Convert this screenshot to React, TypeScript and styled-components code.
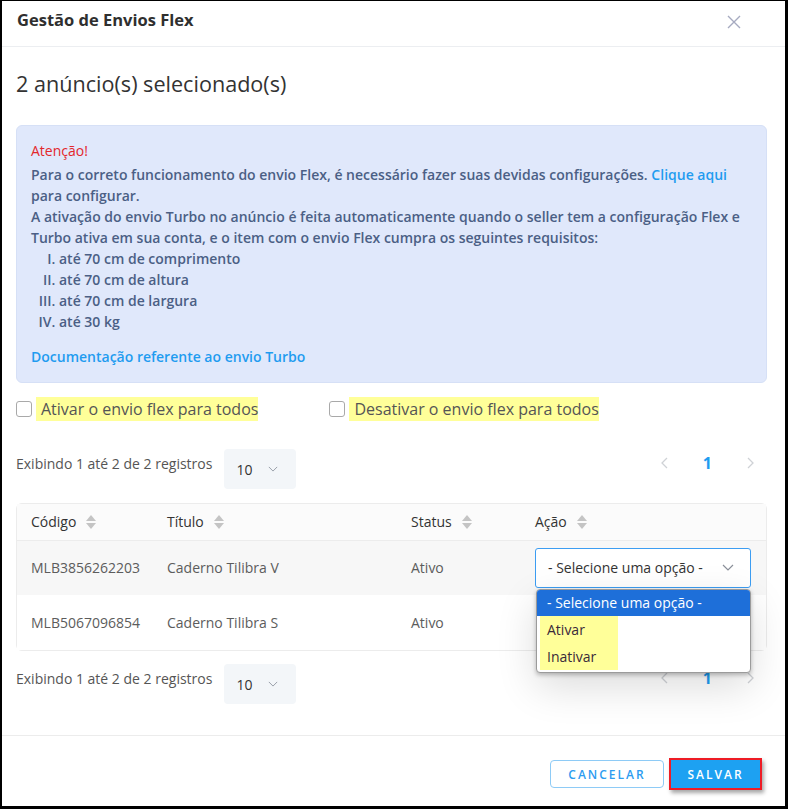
import React from "react";
import styled, { createGlobalStyle } from "styled-components";

const Global = createGlobalStyle`
  html, body { margin: 0; padding: 0; background: #fff; }
  body { font-family: "Open Sans", "Noto Sans", sans-serif; }
  * { box-sizing: border-box; }
`;

const Frame = styled.div`
  width: 788px;
  height: 809px;
  border-style: solid;
  border-color: #000;
  border-width: 1px 3px 3px 2px;
  background: #fff;
  display: flex;
  flex-direction: column;
`;

const Header = styled.header`
  height: 46px;
  border-bottom: 1px solid #eceef1;
  display: flex;
  justify-content: space-between;
  align-items: flex-start;
  padding: 8px 44px 0 15px;
`;

const Title = styled.h1`
  margin: 0;
  font-size: 16.5px;
  line-height: 22px;
  font-weight: 700;
  color: #2f2f2f;
`;

const CloseBtn = styled.button`
  border: 0;
  background: none;
  padding: 0;
  margin-top: 6px;
  width: 14px;
  height: 14px;
  display: flex;
  cursor: pointer;
`;

const Body = styled.main`
  flex: 1;
  padding: 0 18px 0 14px;
  display: flex;
  flex-direction: column;
`;

const Heading = styled.h2`
  margin: 23px 0 0;
  font-size: 21.6px;
  line-height: 28px;
  font-weight: 400;
  color: #333;
`;

const Alert = styled.div`
  margin-top: 27px;
  background: #e0e8fb;
  border: 1px solid #d6e0f6;
  border-radius: 6px;
  padding: 14px 15px 15px 14px;
  font-size: 14px;
  line-height: 21px;
  font-weight: 600;
  color: #4b5f85;
`;

const AlertTitle = styled.div`
  color: #e3262b;
  font-weight: 400;
  margin-bottom: 3px;
`;

const Link = styled.a`
  color: #1f9cf0;
  text-decoration: none;
`;

const RomanList = styled.ol`
  list-style: upper-roman;
  margin: 0;
  padding-left: 28px;
`;

const DocLink = styled(Link)`
  display: block;
  margin-top: 14px;
`;

const CheckRow = styled.div`
  margin-top: 14px;
  display: flex;
  align-items: center;
  gap: 71px;
`;

const CheckLabel = styled.label`
  display: flex;
  align-items: center;
  gap: 4px;
  font-size: 16px;
  line-height: 24px;
  color: #555;
`;

const Box = styled.span`
  width: 16px;
  height: 16px;
  border: 1px solid #a9a9a9;
  border-radius: 3px;
  background: #fff;
`;

const Marked = styled.span`
  background: #ffff99;
  padding: 0 0 0 5px;
`;

const Bar = styled.div<{ $top: number }>`
  margin-top: ${(p) => p.$top}px;
  display: flex;
  justify-content: space-between;
  align-items: flex-start;
`;

const BarLeft = styled.div`
  display: flex;
  align-items: flex-start;
  gap: 12px;
`;

const Info = styled.span`
  font-size: 14px;
  line-height: 30px;
  color: #555;
`;

const PageSize = styled.div`
  width: 72px;
  height: 40px;
  border-radius: 4px;
  background: #f3f6f9;
  display: flex;
  align-items: center;
  justify-content: space-between;
  padding: 0 18px 0 12px;
  font-size: 14px;
  color: #333;
`;

const Pager = styled.div`
  display: flex;
  align-items: center;
  height: 28px;
  gap: 35px;
  margin-right: 13px;
`;

const PageNum = styled.span`
  font-size: 16px;
  font-weight: 700;
  color: #1f9cf0;
`;

const Chev = styled.span`
  display: flex;
  color: #cfd2d6;
`;

const TableWrap = styled.div`
  margin-top: 14px;
  border: 1px solid #ececec;
  border-radius: 6px;
`;

const Table = styled.table`
  width: 100%;
  border-collapse: collapse;
  font-size: 14px;
`;

const Th = styled.th<{ $w?: number }>`
  width: ${(p) => (p.$w ? `${p.$w}px` : "auto")};
  height: 36px;
  text-align: left;
  font-weight: 400;
  color: #333;
  padding: 0 0 0 14px;
  background: #fbfbfb;
  border-bottom: 1px solid #ececec;
`;

const ThInner = styled.span`
  display: inline-flex;
  align-items: center;
  gap: 10px;
`;

const Tr = styled.tr<{ $hover?: boolean }>`
  background: ${(p) => (p.$hover ? "#f7f7f7" : "#fff")};
  & + & td { border-top: 1px solid #ececec; }
`;

const Td = styled.td`
  height: 55px;
  padding: 0 0 0 14px;
  color: #5c5c5c;
`;

const SelectWrap = styled.div`
  position: relative;
  width: 216px;
`;

const SelectBox = styled.div`
  height: 40px;
  border: 1px solid #3c9df2;
  border-radius: 3px;
  background: #fff;
  display: flex;
  align-items: center;
  justify-content: space-between;
  padding: 0 16px 0 12px;
  color: #333;
`;

const Menu = styled.ul`
  position: absolute;
  top: 41px;
  left: 1px;
  width: 215px;
  margin: 0;
  padding: 0 0 2px;
  list-style: none;
  background: #fff;
  border: 1px solid #9b9b9b;
  border-radius: 4px;
  overflow: hidden;
  box-shadow: 0 2px 4px rgba(0, 0, 0, 0.25), 0 14px 40px rgba(0, 0, 0, 0.14);
  z-index: 5;
`;

const Option = styled.li<{ $active?: boolean }>`
  height: ${(p) => (p.$active ? 26 : 27)}px;
  line-height: ${(p) => (p.$active ? 26 : 27)}px;
  padding-left: 10px;
  font-size: 14px;
  color: ${(p) => (p.$active ? "#fff" : "#3a2a3a")};
  background: ${(p) => (p.$active ? "#1e6fd9" : "transparent")};
`;

const OptionMarked = styled.span`
  display: inline-block;
  background: #ffff99;
  padding: 0 7px;
  margin-left: -7px;
  width: 78px;
`;

const Footer = styled.footer`
  height: 71px;
  border-top: 1px solid #ececec;
  display: flex;
  justify-content: flex-end;
  align-items: center;
  gap: 5px;
  padding: 22px 23px 16px 0;
`;

const BtnBase = styled.button`
  font-family: "Open Sans", sans-serif;
  font-size: 12px;
  font-weight: 600;
  letter-spacing: 2px;
  border-radius: 4px;
  cursor: pointer;
`;

const CancelBtn = styled(BtnBase)`
  width: 114px;
  height: 28px;
  background: #fff;
  border: 1px solid #8ecbf6;
  color: #2d9cf0;
`;

const SaveBtn = styled(BtnBase)`
  width: 93px;
  height: 32px;
  background: #1da1f2;
  color: #fff;
  border: 2px solid #ee1c25;
  border-radius: 0;
  box-shadow: 2px 3px 4px rgba(0, 0, 0, 0.35);
`;

const CloseIcon = () => (
  <svg width="14" height="14" viewBox="0 0 14 14">
    <path d="M1 1L13 13M13 1L1 13" stroke="#a6aac0" strokeWidth="1.4" />
  </svg>
);

const ChevronDown = ({ size = 12, color = "#8a8f99" }: { size?: number; color?: string }) => (
  <svg width={size} height={size / 2 + 1} viewBox="0 0 12 7">
    <path d="M1 1L6 6L11 1" fill="none" stroke={color} strokeWidth="1.2" />
  </svg>
);

const ChevronSide = ({ dir }: { dir: "l" | "r" }) => (
  <svg width="7" height="12" viewBox="0 0 7 12">
    <path d={dir === "l" ? "M6 1L1 6L6 11" : "M1 1L6 6L1 11"} fill="none" stroke="currentColor" strokeWidth="1.3" />
  </svg>
);

const SortIcon = () => (
  <svg width="10" height="14" viewBox="0 0 10 14">
    <path d="M5 0L10 6H0Z" fill="#c4c4c4" />
    <path d="M5 14L10 8H0Z" fill="#c4c4c4" />
  </svg>
);

const RecordsBar = ({ top }: { top: number }) => (
  <Bar $top={top}>
    <BarLeft>
      <Info>Exibindo 1 até 2 de 2 registros</Info>
      <PageSize>
        <span>10</span>
        <ChevronDown size={10} color="#9aa0aa" />
      </PageSize>
    </BarLeft>
    <Pager>
      <Chev><ChevronSide dir="l" /></Chev>
      <PageNum>1</PageNum>
      <Chev><ChevronSide dir="r" /></Chev>
    </Pager>
  </Bar>
);

export default function App() {
  return (
    <>
      <Global />
      <Frame>
        <Header>
          <Title>Gestão de Envios Flex</Title>
          <CloseBtn aria-label="Fechar"><CloseIcon /></CloseBtn>
        </Header>
        <Body>
          <Heading>2 anúncio(s) selecionado(s)</Heading>
          <Alert>
            <AlertTitle>Atenção!</AlertTitle>
            Para o correto funcionamento do envio Flex, é necessário fazer suas devidas configurações.{" "}
            <Link href="#">Clique aqui</Link>
            <br />
            para configurar.
            <br />
            A ativação do envio Turbo no anúncio é feita automaticamente quando o seller tem a configuração Flex e
            Turbo ativa em sua conta, e o item com o envio Flex cumpra os seguintes requisitos:
            <RomanList>
              <li>até 70 cm de comprimento</li>
              <li>até 70 cm de altura</li>
              <li>até 70 cm de largura</li>
              <li>até 30 kg</li>
            </RomanList>
            <DocLink href="#">Documentação referente ao envio Turbo</DocLink>
          </Alert>
          <CheckRow>
            <CheckLabel>
              <Box />
              <Marked>Ativar o envio flex para todos</Marked>
            </CheckLabel>
            <CheckLabel>
              <Box />
              <Marked>Desativar o envio flex para todos</Marked>
            </CheckLabel>
          </CheckRow>
          <RecordsBar top={28} />
          <TableWrap>
            <Table>
              <thead>
                <tr>
                  <Th $w={136}><ThInner>Código <SortIcon /></ThInner></Th>
                  <Th $w={244}><ThInner>Título <SortIcon /></ThInner></Th>
                  <Th $w={124}><ThInner>Status <SortIcon /></ThInner></Th>
                  <Th><ThInner>Ação <SortIcon /></ThInner></Th>
                </tr>
              </thead>
              <tbody>
                <Tr $hover>
                  <Td>MLB3856262203</Td>
                  <Td>Caderno Tilibra V</Td>
                  <Td>Ativo</Td>
                  <Td>
                    <SelectWrap>
                      <SelectBox>
                        <span>- Selecione uma opção -</span>
                        <ChevronDown size={12} color="#8a8f99" />
                      </SelectBox>
                      <Menu>
                        <Option $active>- Selecione uma opção -</Option>
                        <Option><OptionMarked>Ativar</OptionMarked></Option>
                        <Option><OptionMarked>Inativar</OptionMarked></Option>
                      </Menu>
                    </SelectWrap>
                  </Td>
                </Tr>
                <Tr>
                  <Td>MLB5067096854</Td>
                  <Td>Caderno Tilibra S</Td>
                  <Td>Ativo</Td>
                  <Td />
                </Tr>
              </tbody>
            </Table>
          </TableWrap>
          <RecordsBar top={13} />
        </Body>
        <Footer>
          <CancelBtn>CANCELAR</CancelBtn>
          <SaveBtn>SALVAR</SaveBtn>
        </Footer>
      </Frame>
    </>
  );
}
